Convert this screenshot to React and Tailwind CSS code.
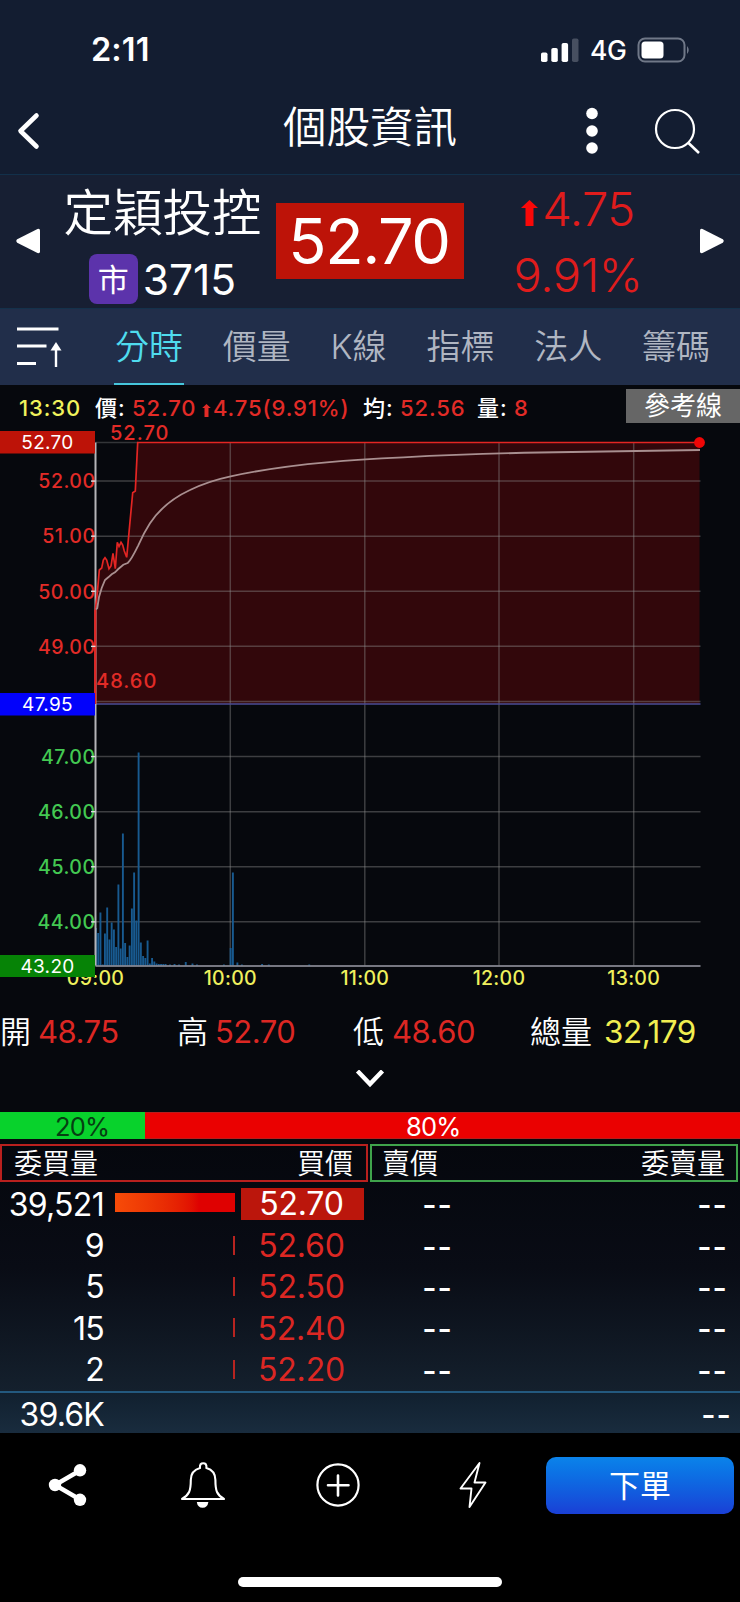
import { useState } from "react";
import clsx from "clsx";

const TABS = ["分時", "價量", "K線", "指標", "法人", "籌碼"];

const BIDS = [
  { volume: "39,521", price: "52.70", best: true },
  { volume: "9", price: "52.60" },
  { volume: "5", price: "52.50" },
  { volume: "15", price: "52.40" },
  { volume: "2", price: "52.20" },
];

const LEFT = 95.5;
const RIGHT = 700.5;
const TOP = 442.5;
const BOTTOM = 965.5;
const STEP = 2.245;

const priceY = (price) => TOP + (52.7 - price) * 55.1;

const HOURS = [
  { label: "09:00", x: 95.5 },
  { label: "10:00", x: 230.3 },
  { label: "11:00", x: 364.8 },
  { label: "12:00", x: 499 },
  { label: "13:00", x: 633.7 },
];

const UP_LABELS = [52, 51, 50, 49];
const DOWN_LABELS = [47, 46, 45, 44];

// [minute after open, bar height]
const VOLUMES = [
  [0, 37.5], [1, 32.5], [2, 53], [3, 1], [4, 32], [5, 58], [6, 26], [7, 43],
  [8, 36], [9, 18.5], [10, 81], [11, 17], [12, 132], [13, 22.5], [14, 8.5],
  [15, 20], [16, 57], [17, 93], [18, 45], [19, 213], [20, 23], [21, 9.5],
  [22, 7.5], [23, 25], [24, 2], [25, 7.5], [26, 4], [27, 2], [28, 1.5],
  [29, 1.5], [30, 1.5], [31, 1.5], [33, 1], [35, 1.5], [37, 1], [40, 3.5],
  [43, 2], [45, 1], [57, 1], [60, 17.5], [61, 93], [63, 3], [65, 1],
  [74, 1.5], [77, 1], [95, 1],
];

const PRICE_LINE =
  "95.2,701 95.3,610 97.3,593 99.3,570 101.7,568 103.3,560 105,557.7 106.7,560 109,568.7 111,566 113,553.3 115.3,568.7 117.3,542.3 119,546.5 121,542.3 122.7,545 124.3,551 126.7,557.3 128.3,540 132.7,492.7 135.3,491 137.7,442.5 699.5,442.5";

const AVERAGE_LINE =
  "M96 609.5 L97.3 608 L99 597 L101.7 588 L105 580 L108.3 577.3 L111.7 574.3 L115 572.3 L118.3 569 L123.3 564.7 L127.7 563 C131 560 134 554 138.3 545.3 C142 537 145 531 150 523.3 C160 508 175 497 190 490 C204 483 218 479 230.7 476.3 C260 470 290 465.5 326.7 462.3 C352 460 380 458.4 403.3 457.3 C450 454.9 500 453.3 540 452.5 C600 451.2 650 450.5 700 450";

const StatusBar = () => (
  <div className="flex h-[88px] items-center justify-between pt-3 pr-[49px] pl-[91px]">
    <span className="text-[32.5px] leading-none font-semibold tracking-[0.1px]">2:11</span>
    <div className="flex items-center">
      <svg width="38" height="24" viewBox="0 0 38 24" fill="#fff">
        <rect x="0" y="14.5" width="6.5" height="9.5" rx="1.8" />
        <rect x="10.3" y="10" width="6.5" height="14" rx="1.8" />
        <rect x="20.6" y="5" width="6.5" height="19" rx="1.8" />
        <rect x="31" y="0.5" width="6.5" height="23.5" rx="1.8" fill="#474f60" />
      </svg>
      <span className="ml-[11px] w-[37px] text-[26.5px] leading-none font-medium tracking-[-0.4px]">
        4G
      </span>
      <svg className="ml-[10px]" width="54" height="26" viewBox="0 0 54 26">
        <rect x="1.5" y="1.5" width="46" height="23" rx="6.5" fill="none" stroke="#707888" strokeWidth="2" />
        <rect x="4.5" y="4.5" width="22" height="17" rx="3.5" fill="#fff" />
        <path d="M50 9 Q53.5 13 50 17 Z" fill="#707888" />
      </svg>
    </div>
  </div>
);

const Header = () => (
  <header className="relative flex h-[87px] items-center justify-between border-b border-[#12304a] pr-[39px] pl-4">
    <svg width="26" height="40" viewBox="0 0 26 40" fill="none" stroke="#fff" strokeWidth="4.6" strokeLinecap="round" strokeLinejoin="round">
      <path d="M20.5 4.5 L4.5 20 L20.5 35.5" />
    </svg>
    <h1 className="absolute inset-x-0 top-[15px] text-center text-[43.5px] leading-[48px] font-[350]">
      個股資訊
    </h1>
    <div className="flex items-center gap-[56px]">
      <svg width="12" height="48" viewBox="0 0 12 48" fill="#fff">
        <circle cx="6" cy="6.5" r="5.8" />
        <circle cx="6" cy="24" r="5.8" />
        <circle cx="6" cy="41" r="5.8" />
      </svg>
      <svg width="47" height="48" viewBox="0 0 47 48" fill="none" stroke="#fff" strokeWidth="2.2">
        <circle cx="21" cy="22" r="19" />
        <path d="M34.5 36 L45 46" strokeWidth="2.6" />
      </svg>
    </div>
  </header>
);

const UpArrow = ({ className }) => (
  <svg className={className} viewBox="0 0 17 26" fill="currentColor">
    <path d="M8.5 0 L17 8 H12.5 V26 H4.5 V8 H0 Z" />
  </svg>
);

const StockSummary = () => (
  <section className="grid h-[133px] grid-cols-[49px_227px_188px_226px_50px] items-center bg-[#171f33]">
    <svg className="mb-0.5 ml-4" width="24" height="26" viewBox="0 0 24 26" fill="#fff">
      <path d="M1.2 11.3 L21.5 1 Q24 0.4 24 2.5 V23.5 Q24 25.6 21.5 25 L1.2 14.7 Q-0.6 13 1.2 11.3 Z" />
    </svg>
    <div className="flex h-full flex-col items-center pt-[8px]">
      <span className="text-[49.5px] leading-[60px] font-[350]">定穎投控</span>
      <div className="mt-[11px] flex items-center gap-[5px]">
        <span className="flex h-[50px] w-[49px] items-center justify-center rounded-lg bg-[#5c33ab] text-[31px] leading-none">
          市
        </span>
        <span className="pt-[2px] text-[42.5px] leading-none tracking-[0px]">3715</span>
      </div>
    </div>
    <div className="mb-px flex h-[76px] items-center justify-center bg-[#bd1308] pt-px pr-0.5 text-[63px] leading-none tracking-[-1.4px]">
      52.70
    </div>
    <div className="flex flex-col items-center pl-0.5 text-[47px] leading-[66px] font-[350] tracking-[-0.4px] text-[#e01c1c]">
      <span className="flex items-center gap-1">
        <UpArrow className="mt-2 h-[26px] w-[17px] text-[#fa0808]" />
        4.75
      </span>
      <span>9.91%</span>
    </div>
    <svg className="mb-0.5 ml-[10px]" width="24" height="26" viewBox="0 0 24 26" fill="#fff">
      <path d="M22.8 11.3 L2.5 1 Q0 0.4 0 2.5 V23.5 Q0 25.6 2.5 25 L22.8 14.7 Q24.6 13 22.8 11.3 Z" />
    </svg>
  </section>
);

const TabBar = ({ active, onSelect }) => (
  <nav className="flex h-[77px] border-t border-[#14314b] bg-[#212e4a]">
    <svg className="mt-[17px] ml-[17px] shrink-0" width="46" height="44" viewBox="0 0 46 44" fill="none" stroke="#fff" strokeWidth="2.8">
      <path d="M0 3 H41.5 M0 20 H29.5 M0 37.5 H19" />
      <path d="M39 22 V41" strokeWidth="2.4" />
      <path d="M39 16 L44.5 24.5 H33.5 Z" fill="#fff" stroke="none" />
    </svg>
    <div className="ml-[51px] flex gap-[37.8px]">
      {TABS.map((tab) => (
        <button
          key={tab}
          type="button"
          onClick={() => onSelect(tab)}
          className={clsx(
            "h-[76px] border-b-2 px-px pt-0.5 text-[34px] leading-none font-[350]",
            tab === active
              ? "border-[#46c6dc] text-[#4fdcee]"
              : "border-transparent text-[#b0b6c2]",
          )}
        >
          {tab}
        </button>
      ))}
    </div>
  </nav>
);

const InfoBar = () => (
  <div className="flex h-10 items-center pt-[6px] pl-[19px] text-[22px] leading-none tracking-[0.9px] text-[#e22b27]">
    <span className="w-[76px] font-medium text-[#f0f25c]">13:30</span>
    <span className="w-[37px] font-medium text-white">價:</span>
    <span className="w-[70px] font-[450]">52.70</span>
    <UpArrow className="mt-1 mr-[2px] h-[13px] w-[9px]" />
    <span className="w-[150px] font-[450]">4.75(9.91%)</span>
    <span className="w-[37px] font-medium text-white">均:</span>
    <span className="w-[77px] font-[450]">52.56</span>
    <span className="w-[37px] font-medium text-white">量:</span>
    <span className="font-[450]">8</span>
    <button
      type="button"
      className="mt-[-4px] ml-auto h-[34px] w-[114px] bg-[#666] text-[26px] leading-none tracking-normal text-white"
    >
      參考線
    </button>
  </div>
);

const PriceTag = ({ y, height, fill, label }) => (
  <g>
    <rect x="0" y={y} width="95" height={height} fill={fill} />
    <text x="47.5" y={y + height / 2 + 7.2} textAnchor="middle" fontSize="19" letterSpacing="0.3" fill="#fff">
      {label}
    </text>
  </g>
);

const IntradayChart = () => (
  <svg className="block overflow-visible" width="740" height="568" viewBox="0 425 740 568">
    <polygon points={`${PRICE_LINE} 699.5,704 95.2,704`} fill="#32070b" />

    <g stroke="#8a8a8a" strokeOpacity="0.42" strokeWidth="1.5">
      <path d={`M${LEFT} ${TOP} H138`} strokeOpacity="0.35" />
      {[...UP_LABELS, 48, ...DOWN_LABELS].map((price) => (
        <path key={price} d={`M${LEFT} ${priceY(price)} H${RIGHT}`} />
      ))}
      {HOURS.slice(1).map(({ x, label }) => (
        <path key={label} d={`M${x} ${TOP} V${BOTTOM}`} />
      ))}
    </g>
    <path d={`M${LEFT} 704 H${RIGHT}`} stroke="#4b4c96" strokeWidth="1.6" />

    <g fill="#185a90">
      {VOLUMES.map(([minute, height]) => (
        <rect key={minute} x={95 + minute * STEP} y={BOTTOM - height} width="1.9" height={height} />
      ))}
    </g>
    <path d={`M${LEFT} ${BOTTOM + 0.5} H${RIGHT}`} stroke="#9c9ca8" strokeWidth="1.4" />
    <path d={`M${LEFT} ${TOP} V${BOTTOM}`} stroke="#b4b4b8" strokeWidth="2" />

    <path d="M95.3 610 V704" stroke="#d92624" strokeWidth="2" />
    <polyline points={PRICE_LINE} fill="none" stroke="#e32523" strokeWidth="1.7" />
    <path d={AVERAGE_LINE} fill="none" stroke="#a98f90" strokeWidth="1.8" />
    <circle cx="699.5" cy="442.5" r="5.4" fill="#f00606" />

    <g fontSize="19.5" fontWeight="450" letterSpacing="0.5" textAnchor="end">
      {UP_LABELS.map((price) => (
        <text key={price} x="95.5" y={priceY(price) + 7.3} fill="#e22b27">
          {price.toFixed(2)}
        </text>
      ))}
      {DOWN_LABELS.map((price) => (
        <text key={price} x="95.5" y={priceY(price) + 7.5} fill="#43c952">
          {price.toFixed(2)}
        </text>
      ))}
    </g>
    <g stroke="#ddd" strokeWidth="1.4">
      {[...UP_LABELS, ...DOWN_LABELS].map((price) => (
        <path key={price} d={`M91 ${priceY(price)} h4.5`} />
      ))}
    </g>

    <g fontSize="20" fontWeight="450" letterSpacing="1" fill="#e22b27">
      <text x="110" y="440">52.70</text>
      <text x="96" y="688.3">48.60</text>
    </g>

    <g fontSize="19.5" fontWeight="500" letterSpacing="0.3" textAnchor="middle" fill="#eff05d">
      {HOURS.map(({ label, x }) => (
        <text key={label} x={x} y="984.5">
          {label}
        </text>
      ))}
    </g>

    <PriceTag y={431} height={22.5} fill="#bd1308" label="52.70" />
    <PriceTag y={693} height={22.5} fill="#0202fb" label="47.95" />
    <PriceTag y={955} height={22} fill="#068306" label="43.20" />
  </svg>
);

const Stat = ({ label, value, className }) => (
  <div className="flex items-center text-[31px] leading-none">
    <span className="font-[350]">{label}</span>
    <span className={clsx("tracking-[-0.5px]", className)}>{value}</span>
  </div>
);

const DayStats = () => (
  <section>
    <div className="grid h-[77px] grid-cols-[177px_176px_177px_1fr]">
      <Stat label="開" value="48.75" className="ml-[7px] text-[#dc2723]" />
      <Stat label="高" value="52.70" className="ml-[7px] text-[#dc2723]" />
      <Stat label="低" value="48.60" className="ml-2 text-[#dc2723]" />
      <Stat label="總量" value="32,179" className="ml-3 text-[31.5px] text-[#f1ee50]" />
    </div>
    <div className="flex h-[42px] justify-center">
      <svg width="30" height="20" viewBox="0 0 30 20" fill="none" stroke="#fff" strokeWidth="4.4">
        <path d="M2.5 1 L15 14 L27.5 1" />
      </svg>
    </div>
  </section>
);

const RatioBar = () => (
  <div className="flex h-[27px] text-[25.5px] leading-[30px] tracking-[-0.8px]">
    <div className="w-[145px] bg-[#08d22c] pl-[55px] text-[#063f12]">20%</div>
    <div className="flex-1 border-y border-[#b91c1c] bg-[#ea0101] pl-[261px] leading-[28px]">80%</div>
  </div>
);

const Dashes = ({ className }) => (
  <span
    className={clsx(
      "flex h-8 w-[27px] shrink-0 items-center justify-center text-[31px] leading-none font-medium tracking-[0.8px] whitespace-nowrap",
      className,
    )}
  >
    --
  </span>
);

const OrderBook = () => (
  <section className="bg-linear-to-b from-[#05070d] via-[#090c15] to-[#14202d]">
    <div className="mt-[5px] grid grid-cols-2 gap-[2px] pr-[2px] text-[28px] leading-[36px] font-[350]">
      <div className="flex h-[38px] justify-between border-2 border-[#b9201e] pr-[13px] pl-[12px]">
        <span>委買量</span>
        <span>買價</span>
      </div>
      <div className="flex h-[38px] justify-between border-2 border-[#3fa34b] pr-[11px] pl-[10px]">
        <span>賣價</span>
        <span>委賣量</span>
      </div>
    </div>
    <div className="pt-[2px] text-[32px] leading-none tracking-[-0.7px]">
      {BIDS.map(({ volume, price, best }) => (
        <div key={price} className="flex h-[41.4px] items-center">
          <span className="w-[104px] text-right">{volume}</span>
          <div className="ml-[11px] flex w-[120px] justify-end">
            {best ? (
              <div className="mb-1 h-[19px] w-full bg-linear-to-r from-[#f74b08] to-[#df0101] to-70%" />
            ) : (
              <div className="mb-0.5 h-[19px] w-[2px] bg-[#b82420]" />
            )}
          </div>
          <span
            className={clsx(
              "ml-[6px] flex h-8 w-[123px] items-center justify-center pr-0.5 tracking-[-0.2px]",
              best ? "mb-px bg-[#bb160c]" : "text-[#dc2723]",
            )}
          >
            {price}
          </span>
          <Dashes className="ml-[60px]" />
          <Dashes className="mr-[14px] ml-auto" />
        </div>
      ))}
    </div>
  </section>
);

const TotalRow = () => (
  <div className="flex h-[42px] items-center border-t-2 border-[#23597f] bg-linear-to-b from-[#11202f] to-[#192c3e] pt-[5px] text-[32px] leading-none tracking-[-0.8px]">
    <span className="w-[104px] text-right">39.6K</span>
    <Dashes className="mr-[10px] mb-0.5 ml-auto" />
  </div>
);

const BottomBar = () => (
  <footer className="h-[169px] bg-black">
    <div className="flex h-[105px] items-center pr-[6px]">
      <svg className="ml-[48px]" width="40" height="46" viewBox="0 0 40 46" fill="#fff">
        <path d="M32 8.5 L7 23 L32 37.5" fill="none" stroke="#fff" strokeWidth="4.4" />
        <circle cx="32" cy="8.3" r="6.2" />
        <circle cx="7" cy="23" r="6.2" />
        <circle cx="32" cy="37.8" r="6.2" />
      </svg>
      <svg className="ml-[92px]" width="46" height="46" viewBox="0 0 46 46" fill="none" stroke="#fff" strokeWidth="2.1" strokeLinejoin="round">
        <path d="M20 6 C19.6 2.4 21 1.2 23.2 1.2 C25.4 1.2 26.8 2.4 26.4 6 C32 7.6 35.4 12 35.4 18 C35.4 29 36.8 32.6 44 37 H2 C9.2 32.6 10.8 29 10.8 18 C10.8 12 14.4 7.6 20 6 Z" />
        <path d="M16.8 40 H28.4 Q27.5 45.8 22.6 45.8 Q17.7 45.8 16.8 40 Z" fill="#fff" stroke="none" />
      </svg>
      <svg className="ml-[89px]" width="46" height="46" viewBox="0 0 46 46" fill="none" stroke="#fff">
        <circle cx="23" cy="23" r="20.6" strokeWidth="2.2" />
        <path d="M23 13.5 V33.5 M13 23.2 H33.5" strokeWidth="2.6" strokeLinecap="round" />
      </svg>
      <svg className="ml-[98px]" width="28" height="48" viewBox="0 0 28 48" fill="none" stroke="#fff" strokeWidth="1.9" strokeLinejoin="round">
        <path d="M20.5 2 L1.5 27.5 H12.5 L10.5 46 L26.5 21.5 H15.5 Z" />
      </svg>
      <button
        type="button"
        className="ml-auto h-[57px] w-[188px] rounded-[10px] bg-linear-to-b from-[#0b83ea] to-[#1a3fd6] text-[31px] leading-none"
      >
        下單
      </button>
    </div>
    <div className="mx-auto mt-[39px] h-[10px] w-[264px] rounded-full bg-white" />
  </footer>
);

export default function App() {
  const [active, setActive] = useState("分時");

  return (
    <div className="h-[1602px] w-[740px] overflow-hidden bg-[#06080d] font-['Inter','Noto_Sans_CJK_TC',sans-serif] text-white">
      <div className="bg-[#131d31]">
        <StatusBar />
        <Header />
      </div>
      <StockSummary />
      <TabBar active={active} onSelect={setActive} />
      <InfoBar />
      <IntradayChart />
      <DayStats />
      <RatioBar />
      <OrderBook />
      <TotalRow />
      <BottomBar />
    </div>
  );
}
